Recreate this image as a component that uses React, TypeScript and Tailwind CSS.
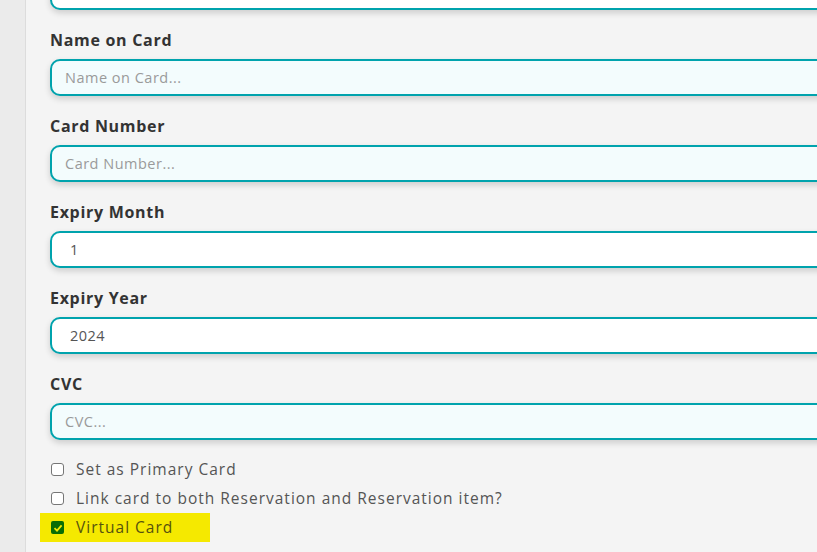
import React from "react";

const font = { fontFamily: '"Open Sans", "Liberation Sans", sans-serif' };

const Field = ({ label, placeholder, value }: { label: string; placeholder?: string; value?: string }) => (
  <div className="mt-[20px]">
    <label className="block h-[20px] leading-[20px] text-[16px] font-bold tracking-[0.7px] text-[#333333] mb-[9px]">{label}</label>
    <div
      className={`h-[37px] w-[900px] rounded-[10px] border-2 border-[#00a3ad] shadow-[0_3px_6px_rgba(0,0,0,0.16)] flex items-center text-[14.5px] tracking-[0.5px] ${
        value ? "bg-white pl-[18px] text-[#555555]" : "bg-[#f3fcfd] pl-[13px] text-[#9a9a9a]"
      }`}
    >
      {value ?? placeholder}
    </div>
  </div>
);

const Check = ({ label }: { label: string }) => (
  <div className="flex items-center h-[29px] gap-[12px] pl-[1px]">
    <span className="w-[13px] h-[13px] rounded-[3px] border border-[#767676] bg-white" />
    <span className="text-[15.5px] tracking-[1px] text-[#555555]">{label}</span>
  </div>
);

export default function App() {
  return (
    <div className="w-[817px] h-[552px] overflow-hidden flex bg-[#f4f4f4]" style={font}>
      <div className="w-[26px] shrink-0 bg-[#ebebeb] border-r border-[#dcdcdc]" />
      <div className="pl-[24px] -mt-[47px]">
        <div className="h-[37px] w-[900px] rounded-[10px] border-2 border-[#00a3ad] bg-white shadow-[0_3px_6px_rgba(0,0,0,0.16)] mt-[20px]" />
        <Field label="Name on Card" placeholder="Name on Card..." />
        <Field label="Card Number" placeholder="Card Number..." />
        <Field label="Expiry Month" value="1" />
        <Field label="Expiry Year" value="2024" />
        <Field label="CVC" placeholder="CVC..." />
        <div className="mt-[15px]">
          <Check label="Set as Primary Card" />
          <Check label="Link card to both Reservation and Reservation item?" />
          <div className="flex items-center h-[29px] gap-[12px] w-[170px] -ml-[10px] pl-[11px] bg-[#f5e900]">
            <span className="w-[13px] h-[13px] rounded-[2px] bg-[#0a6d05] flex items-center justify-center">
              <svg width="10" height="10" viewBox="0 0 10 10">
                <path d="M1.5 5.2 L4 7.6 L8.6 2.4" fill="none" stroke="#f5e900" strokeWidth="1.8" />
              </svg>
            </span>
            <span className="text-[15.5px] tracking-[1px] text-[#55520e]">Virtual Card</span>
          </div>
        </div>
      </div>
    </div>
  );
}
